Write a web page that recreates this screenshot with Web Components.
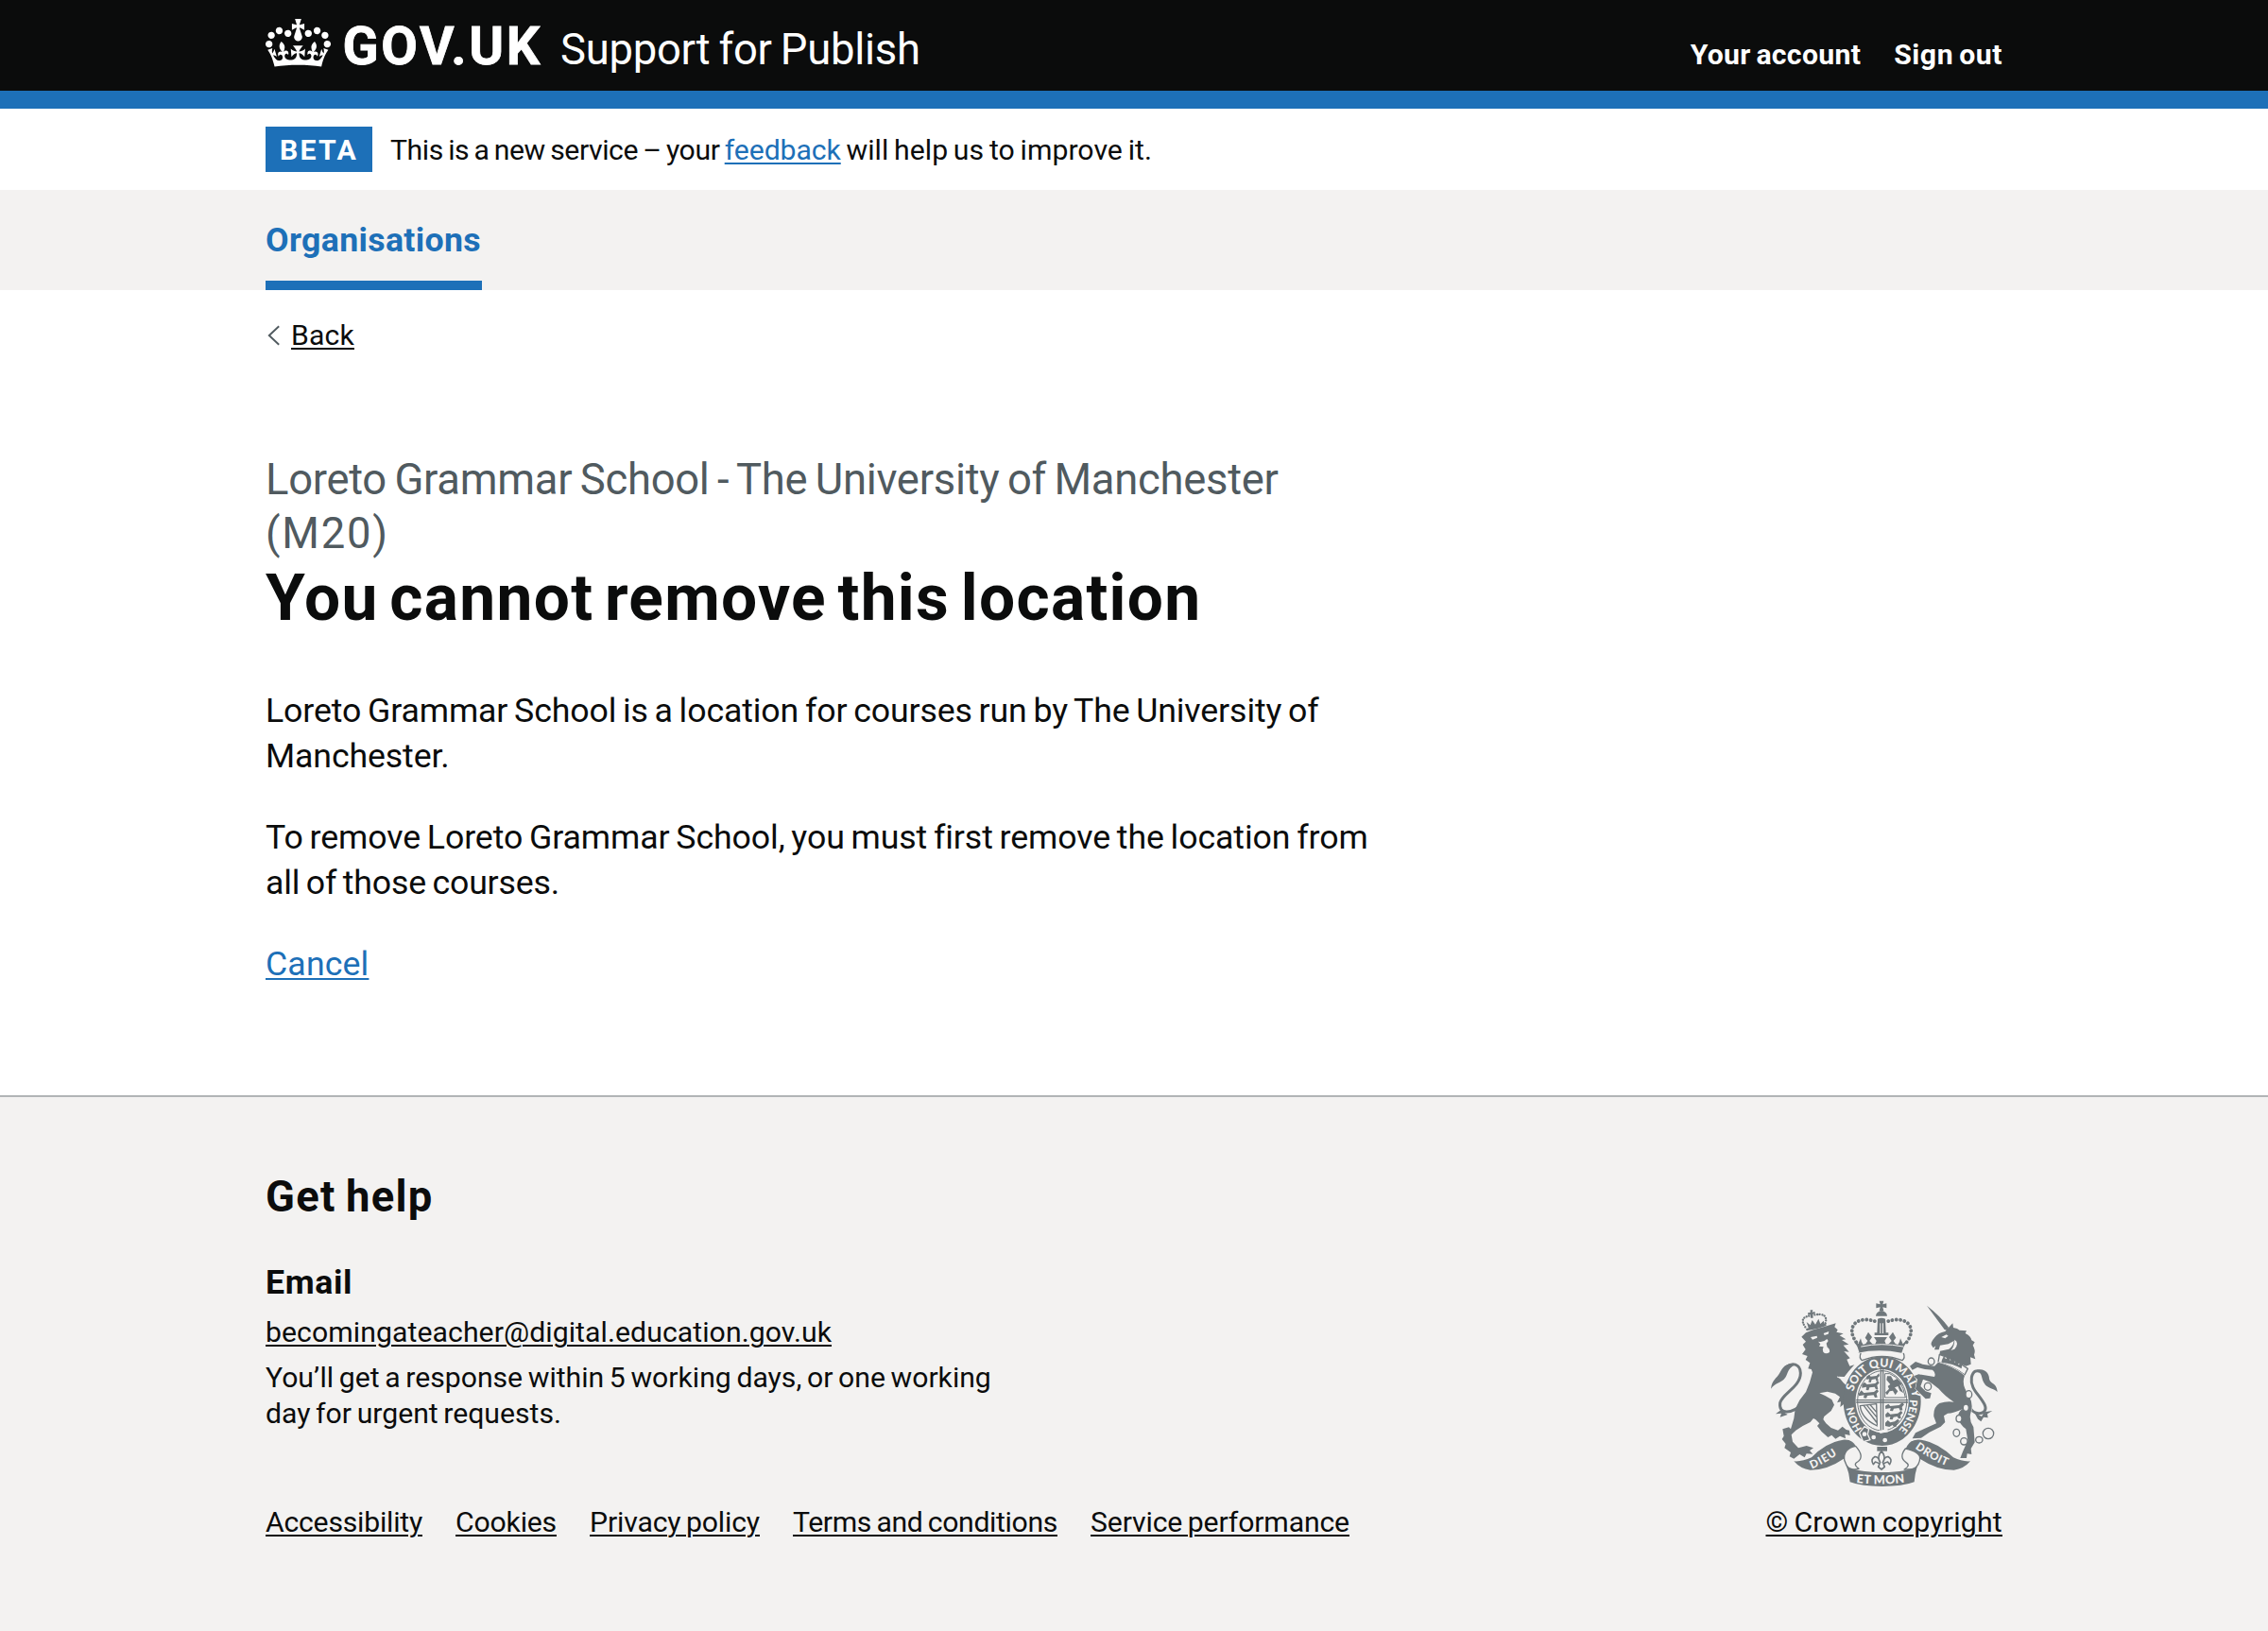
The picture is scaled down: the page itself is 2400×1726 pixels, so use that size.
<!DOCTYPE html>
<html lang="en">
<head>
<meta charset="utf-8">
<title>You cannot remove this location - Support for Publish</title>
<style>
body{margin:0;background:#fff;color:#0b0c0c;font-family:Roboto,"Liberation Sans",sans-serif;font-size:30.2px;line-height:38.3px}
</style>
</head>
<body>
<publish-page></publish-page>
<script>
const BASE = `*{box-sizing:border-box}h1,h2,h3,p,ul{margin:0;padding:0;list-style:none;font-weight:inherit;font-size:inherit}
.wrap{width:1838px;margin:0 auto}`;
const define = (name, css, html) => customElements.define(name, class extends HTMLElement {
  constructor() {
    super();
    this.attachShadow({ mode: 'open' }).innerHTML = `<style>:host{display:block}${BASE}${css}</style>${html}`;
  }
});

define('gov-link', `:host{display:inline}a{color:var(--link,#0b0c0c);text-decoration:underline;text-decoration-thickness:2px;text-underline-offset:3px;white-space:nowrap}`,
  `<a href="#"><slot></slot></a>`);

define('crown-logo', `:host{width:69px;height:51px}svg{display:block}`,
`<svg viewBox="0 0 132 97" width="69" height="51" preserveAspectRatio="none" fill="#fff"><path fill-rule="evenodd" d="M25 30.2c3.5 1.5 7.7-.2 9.1-3.7 1.5-3.6-.2-7.8-3.9-9.2-3.6-1.4-7.6.3-9.1 3.9-1.4 3.5.3 7.5 3.9 9zM9 39.5c3.6 1.5 7.8-.2 9.2-3.7 1.5-3.6-.2-7.8-3.9-9.1-3.6-1.5-7.6.2-9.1 3.8-1.4 3.5.3 7.5 3.8 9zM4.4 57.2c3.5 1.5 7.7-.2 9.1-3.8 1.5-3.6-.2-7.7-3.9-9.1-3.5-1.5-7.6.3-9.1 3.8-1.4 3.5.3 7.6 3.9 9.1zm38.3-21.4c3.5 1.5 7.7-.2 9.1-3.8 1.5-3.6-.2-7.7-3.9-9.1-3.6-1.5-7.6.3-9.1 3.8-1.3 3.6.4 7.7 3.9 9.1zm64.4-5.6c-3.6 1.5-7.8-.2-9.1-3.7-1.5-3.6.2-7.8 3.8-9.2 3.6-1.4 7.7.3 9.2 3.9 1.3 3.5-.4 7.5-3.9 9zm15.9 9.3c-3.6 1.5-7.7-.2-9.1-3.7-1.5-3.6.2-7.8 3.7-9.1 3.6-1.5 7.7.2 9.2 3.8 1.5 3.5-.3 7.5-3.8 9zm4.7 17.7c-3.6 1.5-7.8-.2-9.2-3.8-1.5-3.6.2-7.7 3.9-9.1 3.6-1.5 7.7.3 9.2 3.8 1.3 3.5-.4 7.6-3.9 9.1zM89.3 35.8c-3.6 1.5-7.8-.2-9.2-3.8-1.4-3.6.2-7.7 3.9-9.1 3.6-1.5 7.7.3 9.2 3.8 1.4 3.6-.3 7.7-3.9 9.1zM69.7 17.7l8.9 4.7V9.3l-8.9 2.8c-.2-.3-.5-.6-.9-.9L72.4 0H59.6l3.5 11.2c-.3.3-.6.5-.9.9l-8.8-2.8v13.1l8.8-4.7c.3.3.6.7.9.9l-5 15.4v.1c-.2.8-.4 1.6-.4 2.4 0 4.1 3.1 7.5 7 8.1h.2c.3 0 .7.1 1 .1.4 0 .7 0 1-.1h.2c4-.6 7.1-4.1 7.1-8.1 0-.8-.1-1.7-.4-2.4V34l-5.1-15.4c.4-.2.7-.6 1-.9zM66 92.8c16.9 0 32.8 1.1 47.1 3.2 4-16.9 8.9-26.7 14-33.5l-9.6-3.4c1 4.9 1.1 7.2 0 10.2-1.5-1.4-3-4.3-4.2-8.7L108.6 76c2.8-2 5-3.2 7.5-3.3-4.4 9.4-10 11.9-13.6 11.2-4.3-.8-6.3-4.6-5.6-7.9 1-4.7 5.7-5.9 8-.5 4.3-8.7-3-11.4-7.6-8.8 7.1-7.2 7.9-13.5 2.1-21.1-8 6.1-8.1 12.3-4.5 20.8-4.7-5.4-12.1-2.5-9.5 6.2 3.4-5.2 7.9-2 7.2 3.1-.6 4.3-6.4 7.8-13.5 7.2-10.3-.9-10.9-8-11.2-13.8 2.5-.5 7.1 1.8 11 7.3L80.2 60c-4.1 4.4-8 5.3-12.3 5.4 1.4-4.4 8-11.6 8-11.6H55.5s6.4 7.2 7.9 11.6c-4.2-.1-8-1-12.3-5.4l1.4 16.4c3.9-5.5 8.5-7.7 10.9-7.3-.3 5.8-.9 12.8-11.1 13.8-7.2.6-12.9-2.9-13.5-7.2-.7-5 3.8-8.3 7.1-3.1 2.7-8.7-4.6-11.6-9.4-6.2 3.7-8.5 3.6-14.7-4.6-20.8-5.8 7.6-5 13.9 2.2 21.1-4.7-2.6-11.9.1-7.7 8.8 2.3-5.5 7.1-4.2 8.1.5.7 3.3-1.3 7.1-5.7 7.9-3.5.7-9-1.8-13.5-11.2 2.5.1 4.7 1.3 7.5 3.3l-4.7-15.4c-1.2 4.4-2.7 7.2-4.3 8.7-1.1-3-.9-5.3 0-10.2l-9.5 3.4c5 6.9 9.9 16.7 14 33.5 14.8-2.1 30.8-3.2 47.7-3.2z"/></svg>`);

define('site-header', `:host{background:#0b0c0c;color:#fff;height:115px;border-bottom:19px solid #1d70b8}
.wrap{display:flex;align-items:baseline;padding-top:18.8px}
crown-logo{align-self:flex-start;margin-top:1.2px}
.gov{font-size:56px;line-height:60px;font-weight:700;margin-left:12.5px;width:211.5px;letter-spacing:2.65px;-webkit-text-stroke:.8px #fff}
.service{font-size:45.4px;line-height:50px;margin-left:19px;letter-spacing:-.25px;word-spacing:-2px}
nav{margin-left:auto;display:flex;gap:35px;font-weight:700;word-spacing:-2px}`,
`<div class="wrap"><crown-logo></crown-logo><span class="gov">GOV.UK</span><span class="service">Support for Publish</span>
<nav><span style="letter-spacing:.3px">Your account</span><span style="letter-spacing:.55px">Sign out</span></nav></div>`);

define('phase-banner', `:host{height:86px}
.wrap{display:flex;padding-top:19px}
.tag{height:48px;width:113px;background:#1d70b8;color:#fff;font-weight:700;line-height:48px;letter-spacing:2.25px;padding:1px 0 0 15px;margin-right:19px}
p{line-height:49px;white-space:pre;word-spacing:-1.8px}gov-link{--link:#1d70b8;letter-spacing:-.08px}`,
`<div class="wrap"><strong class="tag">BETA</strong><p><span style="letter-spacing:-.42px">This is a new service – your </span><gov-link>feedback</gov-link><span style="letter-spacing:.04px"> will help us to improve it.</span></p></div>`);

define('primary-nav', `:host{background:#f3f2f1;height:106px}
.wrap{display:flex}a{display:block;height:106px;padding-top:28.8px;border-bottom:10px solid #1d70b8;color:#1d70b8;font-weight:700;font-size:35.7px;line-height:48px;letter-spacing:.33px;width:229px;white-space:nowrap}`,
`<div class="wrap"><a>Organisations</a></div>`);

define('back-link', `:host{padding-top:28.6px}.wrap{display:flex}svg{flex:none;margin:7px 11px 0 2px;width:14px;height:24px}gov-link{letter-spacing:.16px}`,
`<div class="wrap"><svg viewBox="0 0 14 24" fill="none" stroke="#505a5f" stroke-width="1.9"><path d="M12.2 2.2L1.8 12 12.2 21.8"/></svg><gov-link>Back</gov-link></div>`);

define('page-main', `:host{margin-top:105px;height:680.1px;font-size:35.7px;line-height:47.9px}
.caption{display:block;color:#505a5f;font-size:45.4px;line-height:57.4px;letter-spacing:-.28px;word-spacing:-2.5px}
h1{font-size:67.6px;line-height:76.6px;font-weight:700;margin:1.5px 0 57px;letter-spacing:1.31px;word-spacing:-6.5px}
p{margin-bottom:38.5px;letter-spacing:-.12px;word-spacing:-2px}p+p{letter-spacing:-.09px}gov-link{--link:#1d70b8;letter-spacing:.13px}`,
`<div class="wrap"><span class="caption">Loreto Grammar School - The University of Manchester<br><span style="letter-spacing:1.75px">(M20)</span></span>
<h1>You cannot remove this location</h1>
<p>Loreto Grammar School is a location for courses run by The University of<br>Manchester.</p>
<p>To remove Loreto Grammar School, you must first remove the location from<br><span style="letter-spacing:-.2px">all of those courses.</span></p>
<gov-link>Cancel</gov-link></div>`);

define('royal-arms', `:host{width:250px;height:204px}svg{display:block;overflow:visible}text{font-family:Lato,sans-serif;font-weight:900;fill:#f3f2f1}`,
`<svg viewBox="56 40 750 612" width="250" height="204" fill="#6f777b" stroke-linejoin="round" stroke-linecap="round">
<defs><path id="ring" d="M331 405A97 114 0 1 1 520 395"/><path id="hon" d="M361 458Q341 430 333 386"/><path id="pense" d="M512 364Q512 420 474 464"/>
<path id="d1" d="M201 584Q252 564 304 521"/><path id="d2" d="M342 628Q424 638 512 625"/><path id="d3" d="M528 518Q590 564 654 584"/></defs>
<!-- lion -->
<path fill="none" stroke="#6f777b" stroke-width="9" d="M172 378C135 412 95 412 100 375C106 345 165 325 165 280C164 250 138 245 118 262"/>
<path d="M150 252C120 246 108 262 100 278C88 300 75 300 71 330C85 310 100 312 112 300C128 284 118 268 150 252zM102 398L86 410 104 408 100 420 124 412z"/>
<path d="M182 152L205 143 240 133 262 126 277 122 273 134 283 143 279 150 301 155 289 161 309 173 296 175 318 189 301 192 319 213 303 211 322 233 312 237 321 258 336 254 318 274 304 292 285 291 301 311 322 330 331 352 338 385 327 396 321 378 312 394 303 378 291 388 293 371 281 374 290 356 275 345 250 339 225 344 243 352 264 364 272 381 262 400 240 418 237 427 246 440 262 454 284 462 298 450 310 460 320 462 322 478 306 474 308 488 290 480 276 489 264 477 252 484 232 466 218 448 225 440 213 428 206 424 196 436 172 448 150 462 136 476 140 498 158 518 184 511 206 518 194 526 204 537 184 536 178 548 162 538 144 552 130 545 134 532 114 518 118 505 106 490 112 480 108 458 128 452 134 458 144 424 148 394 162 366 182 340 194 310 203 278 199 268 189 266 195 248 181 238 187 226 170 220 181 205 172 190 182 180 168 165z"/>
<path fill="#f3f2f1" d="M197 166l20-4 1 6-15 6zM238 154l17-6-2 8-12 4zM221 180q16 4 28-8l4 6-6 8 3 12q9 6 7 16-12 8-20-1-3-10 1-16l-14-2 4-7z"/>
<path fill="none" stroke="#f3f2f1" stroke-width="3" d="M282 292Q306 300 324 334"/>
<path d="M182 139Q212 134 245 123L247 130Q214 142 184 146z"/><path d="M190 136l-6-18 12 10 6-16 10 14 10-18 6 16 10-10 4 14q-26 10-52 12z"/>
<g fill="none" stroke="#6f777b" stroke-width="7" stroke-dasharray=".1 8"><path d="M180 134Q158 102 198 98"/><path d="M244 122Q254 86 206 96"/></g><path d="M196 80h8l-2 7 8-2 2 7-8 1 1 12h-8l-1-10-7 1-1-7 8-1z"/>
<!-- imperial crown -->
<path d="M415 51h14l-3 11 12-3v15l-12-3 3 12h-14l3-12-13 3V59l13 3zM404 99q1-14 18-16 17 2 18 16zM410 108q12-5 24 0l2 44h8v8h-44v-8h8z"/>
<path fill="#f3f2f1" d="M417 122h3v32h-3zM425 122h3v32h-3z"/>
<g fill="none" stroke="#6f777b" stroke-width="11.5" stroke-dasharray=".1 13"><path d="M342 182C304 130 350 92 412 120"/><path d="M502 182C540 130 494 92 432 120"/></g>
<path d="M352 216Q348 196 334 178q10 2 14 10l8-18q2 14 8 20 10-2 14-12l-8-10 10-18 12 16-8 12q8 12 18 10l4-10-8-12h42l-8 12 4 10q10 2 18-10l-8-12 12-16 10 18-8 10q4 10 14 12 6-6 8-20l8 18q4-8 14-10-14 18-18 38-72-14-140 0z"/>
<path fill="none" stroke="#f3f2f1" stroke-width="3" d="M358 196Q422 182 490 196"/>
<path fill="none" stroke="#6f777b" stroke-width="4" d="M356 218Q350 232 360 240Q424 214 488 240Q498 232 492 218"/>
<!-- garter -->
<path fill-rule="evenodd" d="M424 227C492 227 547 290 547 369S492 511 424 511 301 448 301 369 356 227 424 227zM424 268C378 268 340 313 340 369S378 469 424 469 508 425 508 369 470 268 424 268z"/>
<text font-size="37"><textPath href="#ring" startOffset="66">SOIT QUI MAL Y</textPath></text>
<text font-size="33"><textPath href="#hon">HON</textPath></text>
<text font-size="34"><textPath href="#pense">PENSE</textPath></text>
<circle cx="397" cy="484" r="7" fill="#f3f2f1"/><circle cx="433" cy="493" r="7" fill="#f3f2f1"/>
<path d="M352 470l16-20 14 8-4 16 8 18-22 6z" stroke="#f3f2f1" stroke-width="4"/><circle cx="368" cy="474" r="7" fill="#f3f2f1"/>
<!-- quartered shield -->
<path fill="none" stroke="#6f777b" stroke-width="3" d="M424 273C382 273 346 316 346 369S382 463 424 463 502 422 502 369 466 273 424 273z"/>
<path fill="none" stroke="#6f777b" stroke-width="4" d="M343 366H505M343 373H505M420 270V468M427 270V468"/>
<path d="M374 292l8-6 6 5 18-2 8-8 2 8-6 6 2 10-6 1-3-7-12 2-3 9-7-1 2-10-8 2zM360 317l8-8 8 7 26-3 8-8 5 6-7 8 3 12-7 1-4-8-16 2-3 9-8-1 1-10-14 3zM350 345l8-10 8 8 32-3 10-8 5 6-7 8 3 11-8 1-4-8-20 2-3 8-9-1 2-9-17 3z"/>
<path d="M434 384l10-6 6 7 28-3 10-8 6 6-7 8 2 10-8 1-4-8-16 2-3 8-9-1 2-9-16 3zM434 412l8-8 8 7 24-3 10-8 5 6-7 8 2 10-8 1-4-7-12 2-3 8-9-1 2-9-14 3zM434 438l8-8 8 7 14-3 10-8 5 6-8 10-2 8-8 1-4-6-10 6-13-3z"/>
<path d="M440 290h12l8 14 12-6 16 18-8 2 12 26-12-8-6-14-10 4 10 12-8 12-8-14-10 2-8 12-6-8 12-12-4-8 8-6-12-14z"/>
<path fill="none" stroke="#6f777b" stroke-width="3" d="M434 282h14q40 16 50 76h-64z"/>
<path fill="none" stroke="#6f777b" stroke-width="4" d="M354 384l52-6 2 66M354 384q4 40 54 64M366 384l40 52M376 383l30 36M387 382l19 22"/>
<path fill="#f3f2f1" d="M412 463l28-5 4 8-26 6z"/>
<!-- unicorn -->
<path fill="none" stroke="#6f777b" stroke-width="9" d="M704 392C720 418 762 410 750 382C735 350 702 330 708 294C712 274 724 266 744 280"/>
<path d="M726 270C752 264 764 284 764 298C768 316 788 310 790 340C776 326 758 330 748 312C738 296 744 284 726 270zM716 404l24 14 8-14 26-4-16 10 2 12-14-2-8 14-10-8z"/>
<path d="M566 66L622 142 634 146 634 134Q610 100 566 66z"/>
<path d="M580 190Q578 182 590 168Q602 152 624 148L648 122 650 136Q664 138 670 144L692 146 688 154Q706 162 708 176L718 182 712 192Q722 208 716 222L720 236 704 230 706 252 690 258Q650 240 606 222L608 210 636 204Q650 194 652 178L634 188 608 192 604 206 590 206 594 194 586 200z"/>
<path fill="#f3f2f1" d="M612 166l16-8 6 4-10 8zM654 174q16 10 0 30l-12 4q12-12 12-34z"/>
<path fill="#f3f2f1" stroke="#6f777b" stroke-width="4" d="M606 221Q656 238 696 266L686 286Q650 258 602 246z"/>
<path d="M614 238l6-12 6 10 8-8 6 12 10-8 4 14 10-6 2 14 12-4-2 16Q650 250 612 246z"/>
<path d="M602 246Q650 258 686 288Q674 318 700 352Q714 380 706 404Q698 428 714 452L718 500 706 520 708 538 694 536 692 550 672 550 680 530 696 494 690 458Q672 444 666 426Q662 404 680 394Q650 408 632 408L620 416 624 436 610 450 574 468 548 486 520 488 530 470 556 458 596 440 588 418Q586 388 606 376Q630 368 652 372Q622 352 604 330Q586 316 574 308L554 300 546 322 562 338 580 344 576 360 562 362 540 340 530 330 536 300 524 290 540 284 590 292Q596 280 584 270L560 268 536 262 520 270 512 258 530 244 552 252 590 258z" stroke="#f3f2f1" stroke-width="3" paint-order="stroke"/>
<g fill="#f3f2f1" stroke="#6f777b" stroke-width="4"><ellipse cx="580" cy="243" rx="10" ry="11"/><ellipse cx="569" cy="323" rx="11" ry="12"/><ellipse cx="699" cy="348" rx="10" ry="12"/><ellipse cx="690" cy="390" rx="9" ry="11"/><ellipse cx="668" cy="425" rx="9" ry="11"/><ellipse cx="660" cy="470" rx="10" ry="12"/><ellipse cx="684" cy="497" rx="11" ry="11"/><ellipse cx="732" cy="492" rx="11" ry="10"/><circle cx="761" cy="472" r="17"/></g>
<!-- motto ribbon -->
<path d="M144 560Q170 562 200 548Q246 500 300 492Q330 490 340 512L330 520Q304 530 302 552Q250 588 196 588Q164 584 144 560z"/>
<path d="M704 560Q678 562 650 548Q600 500 548 492Q512 486 498 522L536 534Q546 546 544 552Q598 588 652 588Q684 584 704 560z"/>
<path fill="#f3f2f1" stroke="#6f777b" stroke-width="4" d="M340 512Q300 520 304 556Q308 572 322 588L350 584Q330 570 346 562Q370 546 340 512zM498 520Q476 548 500 564Q516 574 494 586L524 586Q544 570 544 550Q544 530 498 520z"/>
<path d="M310 574Q340 595 424 595T536 574Q528 600 526 626Q490 640 424 640T322 626Q320 598 310 574z"/>
<text font-size="35" letter-spacing="3"><textPath href="#d1">DIEU</textPath></text><text font-size="38" letter-spacing="1"><textPath href="#d2">ET MON</textPath></text><text font-size="35" letter-spacing="1.5"><textPath href="#d3">DROIT</textPath></text>
<path d="M408 514h32v14h-32z"/><path fill="#f3f2f1" stroke="#6f777b" stroke-width="5" d="M422 528q-16 18-4 36-6-20-18-18-14 8-4 24 4-4 6-8 8 2 14 6l-4 10 10 8 10-8-4-10q6-4 14-6 2 4 6 8 10-16-4-24-12-2-18 18 12-18-4-36z"/>
</svg>`);

define('site-footer', `:host{background:#f3f2f1;border-top:2px solid #b1b4b6;height:567px;padding-top:76.6px}
h2{font-size:45.4px;line-height:57.4px;font-weight:700;margin-bottom:38.5px;letter-spacing:1.25px;word-spacing:-2px}
h3{font-size:35.7px;line-height:48px;font-weight:700;margin-bottom:9.8px;letter-spacing:.6px}
.mail{display:block;margin-bottom:9.4px;letter-spacing:.073px}p,.meta{word-spacing:-1.8px}p{letter-spacing:-.02px}
.top{display:flex;justify-content:space-between;height:354.8px}
royal-arms{margin-top:135.6px}
.meta{display:flex}ul{display:flex;gap:35px}.copy{margin-left:auto;letter-spacing:.243px}`,
`<div class="wrap"><div class="top"><section><h2>Get help</h2><h3>Email</h3>
<span class="mail"><gov-link>becomingateacher@digital.education.gov.uk</gov-link></span>
<p>You’ll get a response within 5 working days, or one working<br>day for urgent requests.</p></section><royal-arms></royal-arms></div>
<div class="meta"><ul><li><gov-link style="letter-spacing:-.226px">Accessibility</gov-link></li><li><gov-link style="letter-spacing:-.188px">Cookies</gov-link></li><li><gov-link style="letter-spacing:-.153px">Privacy policy</gov-link></li><li><gov-link style="letter-spacing:-.354px">Terms and conditions</gov-link></li><li><gov-link style="letter-spacing:-.138px">Service performance</gov-link></li></ul><gov-link class="copy">© Crown copyright</gov-link></div></div>`);

define('publish-page', ``, `<site-header></site-header><phase-banner></phase-banner><primary-nav></primary-nav><back-link></back-link><page-main></page-main><site-footer></site-footer>`);
</script>
</body>
</html>
